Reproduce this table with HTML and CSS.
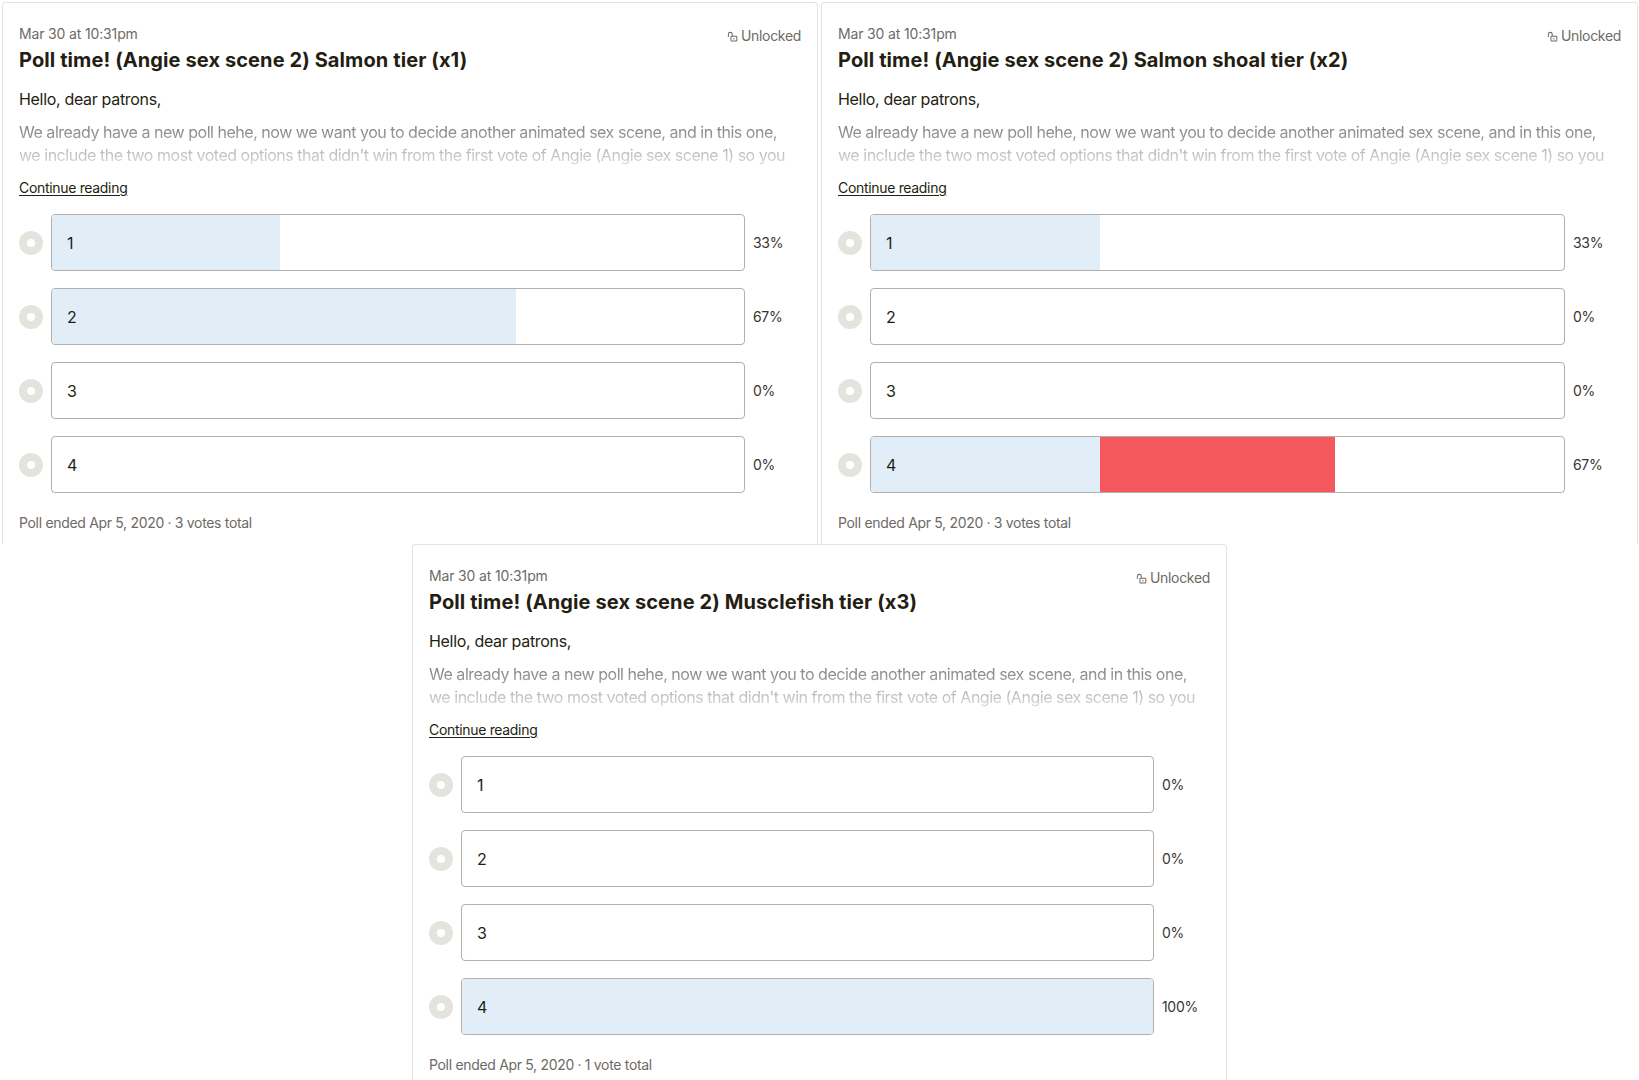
FILE: index.html
```html
<!DOCTYPE html>
<html lang="en">
<head>
<meta charset="utf-8">
<title>Polls</title>
<link rel="stylesheet" href="styles.css">
</head>
<body>
<div class="page">
  <div class="row">
    <article class="card card-top">
      <div class="meta">
        <span class="date">Mar 30 at 10:31pm</span>
        <span class="lock"><svg class="lock-ico" viewBox="0 0 12 12" width="11" height="11"><path d="M1.5 6.5V3.6a2.1 2.1 0 0 1 4.2 0V5.5" fill="none" stroke="currentColor" stroke-width="1.1"/><rect x="4.3" y="5.6" width="6.4" height="5.4" rx="0.8" fill="none" stroke="currentColor" stroke-width="1.1"/><rect x="7" y="7.6" width="1.1" height="1.6" fill="currentColor"/></svg>Unlocked</span>
      </div>
      <h2 class="title">Poll time! (Angie sex scene 2) Salmon tier (x1)</h2>
      <p class="hello">Hello, dear patrons,</p>
      <p class="excerpt">We already have a new poll hehe, now we want you to decide another animated sex scene, and in this one, we include the two most voted options that didn't win from the first vote of Angie (Angie sex scene 1) so you</p>
      <a class="more" href="#">Continue reading</a>
      <div class="poll">
        <div class="opt"><span class="radio"></span><div class="bar"><div class="fill" style="width:33%"></div><span class="label">1</span></div><span class="pct">33%</span></div>
        <div class="opt"><span class="radio"></span><div class="bar"><div class="fill" style="width:67%"></div><span class="label">2</span></div><span class="pct">67%</span></div>
        <div class="opt"><span class="radio"></span><div class="bar"><span class="label">3</span></div><span class="pct">0%</span></div>
        <div class="opt"><span class="radio"></span><div class="bar"><span class="label">4</span></div><span class="pct">0%</span></div>
      </div>
      <p class="foot">Poll ended Apr 5, 2020 · 3 votes total</p>
    </article>

    <article class="card card-top">
      <div class="meta">
        <span class="date">Mar 30 at 10:31pm</span>
        <span class="lock"><svg class="lock-ico" viewBox="0 0 12 12" width="11" height="11"><path d="M1.5 6.5V3.6a2.1 2.1 0 0 1 4.2 0V5.5" fill="none" stroke="currentColor" stroke-width="1.1"/><rect x="4.3" y="5.6" width="6.4" height="5.4" rx="0.8" fill="none" stroke="currentColor" stroke-width="1.1"/><rect x="7" y="7.6" width="1.1" height="1.6" fill="currentColor"/></svg>Unlocked</span>
      </div>
      <h2 class="title">Poll time! (Angie sex scene 2) Salmon shoal tier (x2)</h2>
      <p class="hello">Hello, dear patrons,</p>
      <p class="excerpt">We already have a new poll hehe, now we want you to decide another animated sex scene, and in this one, we include the two most voted options that didn't win from the first vote of Angie (Angie sex scene 1) so you</p>
      <a class="more" href="#">Continue reading</a>
      <div class="poll">
        <div class="opt"><span class="radio"></span><div class="bar"><div class="fill" style="width:33%"></div><span class="label">1</span></div><span class="pct">33%</span></div>
        <div class="opt"><span class="radio"></span><div class="bar"><span class="label">2</span></div><span class="pct">0%</span></div>
        <div class="opt"><span class="radio"></span><div class="bar"><span class="label">3</span></div><span class="pct">0%</span></div>
        <div class="opt"><span class="radio"></span><div class="bar"><div class="fill" style="width:33%"></div><div class="fill fill-hot" style="left:33%;width:34%"></div><span class="label">4</span></div><span class="pct">67%</span></div>
      </div>
      <p class="foot">Poll ended Apr 5, 2020 · 3 votes total</p>
    </article>
  </div>

  <article class="card card-bottom">
    <div class="meta">
      <span class="date">Mar 30 at 10:31pm</span>
      <span class="lock"><svg class="lock-ico" viewBox="0 0 12 12" width="11" height="11"><path d="M1.5 6.5V3.6a2.1 2.1 0 0 1 4.2 0V5.5" fill="none" stroke="currentColor" stroke-width="1.1"/><rect x="4.3" y="5.6" width="6.4" height="5.4" rx="0.8" fill="none" stroke="currentColor" stroke-width="1.1"/><rect x="7" y="7.6" width="1.1" height="1.6" fill="currentColor"/></svg>Unlocked</span>
    </div>
    <h2 class="title">Poll time! (Angie sex scene 2) Musclefish tier (x3)</h2>
    <p class="hello">Hello, dear patrons,</p>
    <p class="excerpt">We already have a new poll hehe, now we want you to decide another animated sex scene, and in this one, we include the two most voted options that didn't win from the first vote of Angie (Angie sex scene 1) so you</p>
    <a class="more" href="#">Continue reading</a>
    <div class="poll">
      <div class="opt"><span class="radio"></span><div class="bar"><span class="label">1</span></div><span class="pct">0%</span></div>
      <div class="opt"><span class="radio"></span><div class="bar"><span class="label">2</span></div><span class="pct">0%</span></div>
      <div class="opt"><span class="radio"></span><div class="bar"><span class="label">3</span></div><span class="pct">0%</span></div>
      <div class="opt"><span class="radio"></span><div class="bar"><div class="fill" style="width:100%"></div><span class="label">4</span></div><span class="pct">100%</span></div>
    </div>
    <p class="foot">Poll ended Apr 5, 2020 · 1 vote total</p>
  </article>
</div>
</body>
</html>
```

FILE: styles.css
```css
* { box-sizing: border-box; }

html, body {
  margin: 0;
  padding: 0;
  background: #ffffff;
}

body {
  font-family: Inter, "Liberation Sans", sans-serif;
  letter-spacing: -0.02em;
  color: #241e12;
  width: 1639px;
  height: 1080px;
  overflow: hidden;
}

.page {
  padding: 2px 0 0 2px;
}

.row {
  display: grid;
  grid-template-columns: 816px 817px;
  column-gap: 3px;
}

.card {
  background: #fff;
  border: 1px solid #e5e3dd;
  border-bottom: none;
  border-radius: 4px 4px 0 0;
  padding: 21px 16px 0 16px;
  overflow: hidden;
}

.card-top {
  height: 542px;
}

.card-bottom {
  width: 815px;
  height: 536px;
  margin: 0 auto;
  position: relative;
  left: -1px;
}

.meta {
  display: flex;
  justify-content: space-between;
  align-items: flex-start;
  height: 20px;
}

.date {
  font-size: 14px;
  line-height: 20px;
  letter-spacing: -0.15px;
  color: #6e6a65;
}

.lock {
  display: flex;
  align-items: center;
  gap: 3px;
  font-size: 14px;
  line-height: 20px;
  color: #6e6a65;
  padding-top: 2px;
}

.lock-ico {
  display: block;
  margin-top: 1px;
}

.title {
  margin: 2px 0 0 0;
  font-size: 20px;
  line-height: 28px;
  font-weight: 700;
  letter-spacing: 0.1px;
  color: #241e12;
}

.hello {
  margin: 13px 0 0 0;
  font-size: 16px;
  line-height: 24px;
  color: #241e12;
}

.excerpt {
  margin: 10px 0 0 0;
  font-size: 16px;
  line-height: 23px;
  letter-spacing: -0.47px;
  color: #8b8782;
  height: 46px;
  -webkit-mask-image: linear-gradient(to bottom, #000 8px, rgba(0,0,0,0.25) 46px);
  mask-image: linear-gradient(to bottom, #000 8px, rgba(0,0,0,0.25) 46px);
}

.more {
  display: block;
  margin-top: 11px;
  font-size: 14px;
  line-height: 20px;
  color: #241e12;
  text-decoration: underline;
  text-underline-offset: 2px;
  width: max-content;
}

.poll {
  margin-top: 16px;
  display: flex;
  flex-direction: column;
  gap: 17px;
}

.opt {
  display: flex;
  align-items: center;
}

.radio {
  flex: none;
  width: 24px;
  height: 24px;
  border-radius: 50%;
  background: #e5e3dd;
  position: relative;
  margin-right: 8px;
}

.radio::after {
  content: "";
  position: absolute;
  left: 8px;
  top: 8px;
  width: 8px;
  height: 8px;
  border-radius: 50%;
  background: #fff;
}

.bar {
  flex: 1;
  height: 57px;
  border: 1px solid #b3afaa;
  border-radius: 4px;
  position: relative;
  overflow: hidden;
  display: flex;
  align-items: center;
}

.fill {
  position: absolute;
  left: 0;
  top: 0;
  bottom: 0;
  background: #e1eef8;
}

.fill-hot {
  background: #f4575c;
}

.label {
  position: relative;
  padding-left: 15px;
  font-size: 16px;
  line-height: 24px;
  color: #241e12;
}

.pct {
  flex: none;
  width: 56px;
  padding-left: 8px;
  font-size: 14px;
  line-height: 20px;
  color: #3b3631;
}

.foot {
  margin: 20px 0 0 0;
  font-size: 14px;
  line-height: 20px;
  color: #6e6a65;
}
```
